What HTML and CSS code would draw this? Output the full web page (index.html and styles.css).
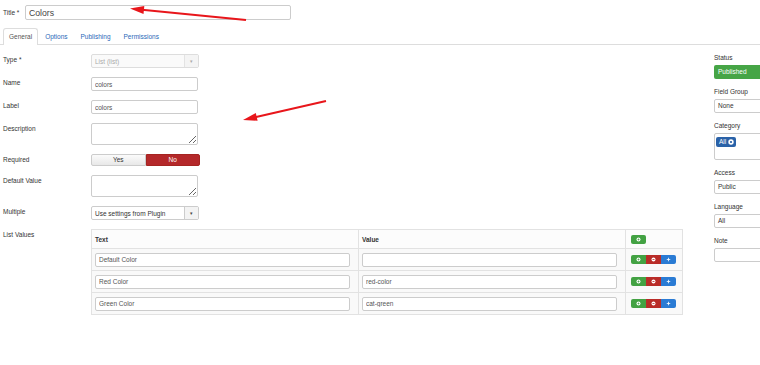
FILE: index.html
```html
<!DOCTYPE html>
<html>
<head>
  <meta charset="utf-8">
  <title>Field: Colors</title>
  <link rel="stylesheet" href="styles.css">
</head>
<body>

  <!-- title -->
  <div class="title-row">
    <label class="title-label">Title *</label>
    <input class="title-input" type="text" value="Colors">
  </div>

  <!-- tabs -->
  <ul class="tabs">
    <li class="tab active">General</li>
    <li class="tab">Options</li>
    <li class="tab">Publishing</li>
    <li class="tab">Permissions</li>
  </ul>

  <div class="content">
    <div class="form">
      <div class="row">
        <label>Type *</label>
        <div class="select disabled"><span>List (list)</span><b class="caret">&#9662;</b></div>
      </div>
      <div class="row">
        <label>Name</label>
        <input class="field" type="text" value="colors">
      </div>
      <div class="row">
        <label>Label</label>
        <input class="field" type="text" value="colors">
      </div>
      <div class="row">
        <label>Description</label>
        <textarea class="area"></textarea>
      </div>
      <div class="row">
        <label>Required</label>
        <div class="toggle"><span class="yes">Yes</span><span class="no">No</span></div>
      </div>
      <div class="row">
        <label>Default Value</label>
        <textarea class="area"></textarea>
      </div>
      <div class="row">
        <label>Multiple</label>
        <div class="select"><span>Use settings from Plugin</span><b class="caret">&#9662;</b></div>
      </div>
      <div class="row">
        <label>List Values</label>
        <table class="values">
          <tr>
            <th class="c-text">Text</th>
            <th class="c-value">Value</th>
            <th class="c-btns">
              <span class="btn-group"><span class="btn add"><svg viewBox="0 0 10 10"><circle cx="5" cy="5" r="4" fill="#fff"/><path d="M5 3v4M3 5h4" stroke="#43a243" stroke-width="1.4"/></svg></span></span>
            </th>
          </tr>
          <tr>
            <td><input class="cell-input" type="text" value="Default Color"></td>
            <td><input class="cell-input" type="text" value=""></td>
            <td class="c-btns">
              <span class="btn-group">
                <span class="btn add"><svg viewBox="0 0 10 10"><circle cx="5" cy="5" r="4" fill="#fff"/><path d="M5 3v4M3 5h4" stroke="#43a243" stroke-width="1.4"/></svg></span>
                <span class="btn del"><svg viewBox="0 0 10 10"><circle cx="5" cy="5" r="4" fill="#fff"/><path d="M3 5h4" stroke="#b92c28" stroke-width="1.6"/></svg></span>
                <span class="btn move"><svg viewBox="0 0 10 10"><path d="M5 1.5v7M1.5 5h7" stroke="#fff" stroke-width="1.6"/></svg></span>
              </span>
            </td>
          </tr>
          <tr>
            <td><input class="cell-input" type="text" value="Red Color"></td>
            <td><input class="cell-input" type="text" value="red-color"></td>
            <td class="c-btns">
              <span class="btn-group">
                <span class="btn add"><svg viewBox="0 0 10 10"><circle cx="5" cy="5" r="4" fill="#fff"/><path d="M5 3v4M3 5h4" stroke="#43a243" stroke-width="1.4"/></svg></span>
                <span class="btn del"><svg viewBox="0 0 10 10"><circle cx="5" cy="5" r="4" fill="#fff"/><path d="M3 5h4" stroke="#b92c28" stroke-width="1.6"/></svg></span>
                <span class="btn move"><svg viewBox="0 0 10 10"><path d="M5 1.5v7M1.5 5h7" stroke="#fff" stroke-width="1.6"/></svg></span>
              </span>
            </td>
          </tr>
          <tr>
            <td><input class="cell-input" type="text" value="Green Color"></td>
            <td><input class="cell-input" type="text" value="cat-green"></td>
            <td class="c-btns">
              <span class="btn-group">
                <span class="btn add"><svg viewBox="0 0 10 10"><circle cx="5" cy="5" r="4" fill="#fff"/><path d="M5 3v4M3 5h4" stroke="#43a243" stroke-width="1.4"/></svg></span>
                <span class="btn del"><svg viewBox="0 0 10 10"><circle cx="5" cy="5" r="4" fill="#fff"/><path d="M3 5h4" stroke="#b92c28" stroke-width="1.6"/></svg></span>
                <span class="btn move"><svg viewBox="0 0 10 10"><path d="M5 1.5v7M1.5 5h7" stroke="#fff" stroke-width="1.6"/></svg></span>
              </span>
            </td>
          </tr>
        </table>
      </div>
    </div>

    <!-- right column -->
    <div class="sidebar">
      <div class="side-group">
        <label>Status</label>
        <div class="status">Published</div>
      </div>
      <div class="side-group">
        <label>Field Group</label>
        <div class="side-box">None</div>
      </div>
      <div class="side-group">
        <label>Category</label>
        <div class="side-box tall">
          <span class="tag">All <svg viewBox="0 0 10 10"><circle cx="5" cy="5" r="4.5" fill="#fff"/><path d="M3.3 3.3l3.4 3.4M6.7 3.3l-3.4 3.4" stroke="#2a62a8" stroke-width="1.4"/></svg></span>
        </div>
      </div>
      <div class="side-group">
        <label>Access</label>
        <div class="side-box">Public</div>
      </div>
      <div class="side-group">
        <label>Language</label>
        <div class="side-box">All</div>
      </div>
      <div class="side-group">
        <label>Note</label>
        <div class="side-box"></div>
      </div>
    </div>
  </div>

  <!-- red annotation arrows drawn over the page -->
  <svg class="marks" width="760" height="365" viewBox="0 0 760 365">
    <line x1="246" y1="20" x2="142" y2="9.7" stroke="#e8161b" stroke-width="2"/>
    <polygon points="130,8.5 144.3,5.9 143.5,13.9" fill="#e8161b"/>
    <line x1="326" y1="101" x2="255" y2="117.3" stroke="#e8161b" stroke-width="2"/>
    <polygon points="243,120 255.8,113 257.6,120.8" fill="#e8161b"/>
  </svg>

</body>
</html>
```

FILE: styles.css
```css
html, body {margin: 0; padding: 0;}
body {font-family: "Liberation Sans", Arial, sans-serif; font-size: 6.5px; color: #333; background: #fff; width: 760px; height: 365px; overflow: hidden; position: relative;}

input, textarea {font-family: "Liberation Sans", Arial, sans-serif; font-size: 6.5px; color: #555; margin: 0; outline: none;}

/* title */
.title-row {display: flex; align-items: center; padding: 5px 0 0 3px;}
.title-label {width: 22px;}
.title-input {box-sizing: border-box; width: 266px; height: 15px; border: 1px solid #ccc; border-radius: 2px; padding: 0 3px; font-size: 8.7px; color: #444;}

/* tabs */
.tabs {list-style: none; margin: 8px 0 0; padding: 0 0 0 3px; display: flex; border-bottom: 1px solid #ddd;}
.tab {padding: 0 5px; line-height: 15px; border: 1px solid transparent; border-bottom: none; border-radius: 3px 3px 0 0; color: #2a69b8; margin-right: 1px;}
.tab.active {border-color: #ddd; background: #fff; color: #555; padding-bottom: 1px; margin-bottom: -1px;}

/* layout */
.content {display: flex; padding-top: 9px;}
.form {margin-left: 3px; width: 680px; flex: none; display: flex; flex-direction: column; gap: 9px;}
.row {display: flex; align-items: flex-start;}
.row > label {width: 88px; flex: none; padding-top: 2px; line-height: 8px;}

/* form fields */
.field {box-sizing: border-box; width: 107px; height: 14px; border: 1px solid #ccc; border-radius: 2px; padding: 0 3px;}
.area {box-sizing: border-box; width: 107px; height: 22px; border: 1px solid #ccc; border-radius: 2px; padding: 2px 3px; resize: vertical;}

.select {box-sizing: border-box; width: 108px; height: 14px; border: 1px solid #ccc; border-radius: 2px; display: flex; align-items: center; background: #fff; color: #333;}
.select span {flex: 1; padding-left: 3px;}
.select .caret {width: 13px; height: 100%; border-left: 1px solid #ccc; background: #f3f3f3; font-weight: normal; font-size: 5px; color: #444; display: flex; align-items: center; justify-content: center;}
.select.disabled {border-color: #ddd; background: #fafafa; color: #aaa;}
.select.disabled .caret {border-left-color: #e3e3e3; color: #aaa; background: #f4f4f4;}

.toggle {display: flex; width: 109px; height: 12px; line-height: 10px; text-align: center;}
.toggle .yes {flex: 1; border: 1px solid #ccc; border-radius: 2px 0 0 2px; background: linear-gradient(#fbfbfb, #e8e8e8); color: #333;}
.toggle .no {flex: 1; border: 1px solid #a52421; border-radius: 0 2px 2px 0; background: #b4282a; color: #fff;}

/* list values table */
.values {flex: none; width: 592px; table-layout: fixed; border-collapse: collapse; border: 1px solid #ddd; background: #f9f9f9;}
.values th, .values td {border: 1px solid #e2e2e2; padding: 0 3px; vertical-align: middle;}
.values th {height: 18px; text-align: left; font-weight: bold; color: #333; background: #fcfcfc;}
.values td {height: 21px;}
.c-text, .c-value {width: 260px;}
.values .c-btns {width: 48px; padding-left: 5px;}
.cell-input {box-sizing: border-box; width: 255px; height: 14px; border: 1px solid #ccc; border-radius: 2px; padding: 0 3px; background: #fff; display: block;}

.btn-group {display: inline-flex; border-radius: 2px; overflow: hidden; vertical-align: middle;}
.btn {width: 15px; height: 9px; display: flex; align-items: center; justify-content: center;}
.btn svg {width: 5px; height: 5px;}
.btn.add {background: #43a243;}
.btn.del {background: #b92c28;}
.btn.move {background: #2a7bd4;}

/* right column */
.sidebar {margin-left: 31px; width: 120px; flex: none; display: flex; flex-direction: column; gap: 9px;}
.side-group label {display: block; line-height: 8px; margin-bottom: 3px;}
.status {height: 14px; line-height: 14px; padding-left: 4px; background: #46a546; color: #fff; border-radius: 2px;}
.side-box {box-sizing: border-box; height: 14px; line-height: 12px; border: 1px solid #ccc; border-radius: 2px; padding: 0 3px; color: #333; background: #fff;}
.side-box.tall {height: 27px; padding: 2px 1px;}
.tag {display: inline-flex; align-items: center; gap: 2px; height: 10px; line-height: 10px; padding: 0 2px 0 3px; background: #2a62a8; color: #fff; border-radius: 2px;}
.tag svg {width: 6px; height: 6px;}

.marks {position: absolute; left: 0; top: 0; pointer-events: none;}
```
